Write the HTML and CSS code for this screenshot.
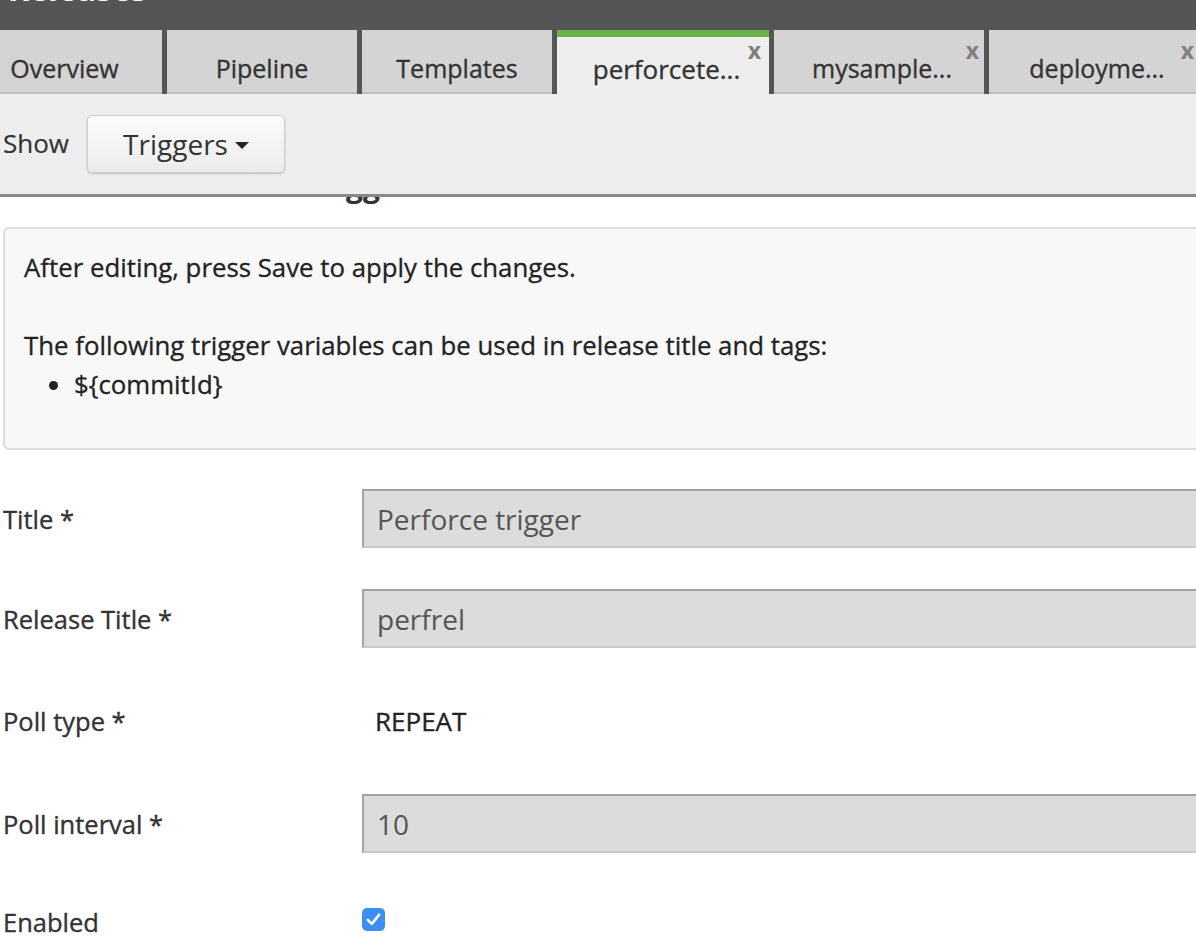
FILE: index.html
```html
<!DOCTYPE html>
<html lang="en">
<head>
<meta charset="utf-8">
<title>Releases</title>
<link rel="stylesheet" href="styles.css">
</head>
<body>
<div class="app">
  <header class="topbar">
    <h1 class="app-title">Releases</h1>
  </header>

  <nav class="tabs">
    <div class="tab tab-overview">Overview</div>
    <div class="tab">Pipeline</div>
    <div class="tab">Templates</div>
    <div class="tab tab-closable tab-active">perforcete...<span class="tab-close">x</span></div>
    <div class="tab tab-closable">mysample...<span class="tab-close">x</span></div>
    <div class="tab tab-closable">deployme...<span class="tab-close">x</span></div>
  </nav>

  <div class="toolbar">
    <span class="toolbar-label">Show</span>
    <button class="dropdown-btn" type="button">Triggers <span class="caret"></span></button>
  </div>

  <main class="content">
    <div class="heading-clip">
      <h2 class="page-heading">Perforce Release Trigger</h2>
    </div>

    <div class="info-box">
      <p class="info-line">After editing, press Save to apply the changes.</p>
      <p class="info-line info-gap">The following trigger variables can be used in release title and tags:</p>
      <ul class="info-list">
        <li>${commitId}</li>
      </ul>
    </div>

    <form class="form">
      <div class="form-row">
        <label class="form-label">Title *</label>
        <div class="form-input">Perforce trigger</div>
      </div>
      <div class="form-row">
        <label class="form-label">Release Title *</label>
        <div class="form-input">perfrel</div>
      </div>
      <div class="form-row form-row-text">
        <label class="form-label">Poll type *</label>
        <div class="form-value">REPEAT</div>
      </div>
      <div class="form-row">
        <label class="form-label">Poll interval *</label>
        <div class="form-input">10</div>
      </div>
      <div class="form-row form-row-check">
        <label class="form-label">Enabled</label>
        <span class="checkbox">
          <svg viewBox="0 0 24 24" width="24" height="24"><path d="M5.5 12.5 L10 17 L18.5 6.5" fill="none" stroke="#fff" stroke-width="3" stroke-linecap="round" stroke-linejoin="round"/></svg>
        </span>
      </div>
    </form>
  </main>
</div>
</body>
</html>
```

FILE: styles.css
```css
* { box-sizing: border-box; }

html, body {
  margin: 0;
  padding: 0;
  width: 1196px;
  height: 942px;
  overflow: hidden;
  background: #fff;
}

body {
  font-family: "Open Sans", Lato, "Liberation Sans", sans-serif;
  color: #333;
}

.app {
  width: 1196px;
  height: 942px;
  overflow: hidden;
}

/* top bar */
.topbar {
  height: 30px;
  background: #555;
  overflow: hidden;
}

.app-title {
  margin: -24px 0 0 8px;
  font-size: 32px;
  line-height: 26px;
  font-weight: 700;
  color: #fff;
}

/* tabs */
.tabs {
  display: flex;
  gap: 5px;
  height: 64px;
  background: #555;
  margin-left: -33px;
  width: 1300px;
}

.tab {
  position: relative;
  flex: 0 0 auto;
  width: 190px;
  height: 64px;
  background: #d4d4d4;
  border-bottom: 2px solid #bdbdbd;
  display: flex;
  align-items: center;
  justify-content: center;
  padding-top: 13px;
  font-size: 25px;
  color: #333;
  -webkit-text-stroke: 0.35px #333;
}

.tab-overview { width: 195px; }

.tab-closable {
  width: 210px;
  padding-left: 6px;
}

.tab-active {
  width: 212px;
  background: #eee;
  border-bottom: none;
  border-top: 7px solid #6ab34a;
  padding-top: 7px;
  padding-left: 7px;
  font-size: 26px;
}

.tab-close {
  position: absolute;
  right: 5px;
  top: 9px;
  font-size: 23px;
  font-weight: 700;
  color: #808080;
  line-height: 23px;
  -webkit-text-stroke: 0;
}

.tab-active .tab-close { top: 2px; right: 8px; }

/* toolbar */
.toolbar {
  height: 103px;
  background: #eee;
  border-bottom: 3px solid #888;
  display: flex;
  align-items: center;
  padding: 0 0 3px 3px;
  gap: 18px;
}

.toolbar-label {
  font-size: 26px;
  color: #333;
  -webkit-text-stroke: 0.2px #333;
}

.dropdown-btn {
  width: 198px;
  height: 58px;
  border: 1px solid #ccc;
  border-radius: 5px;
  background: linear-gradient(#fbfbfb, #ececec);
  box-shadow: 0 1px 2px rgba(0,0,0,0.2);
  font-family: inherit;
  font-size: 28px;
  color: #333;
  display: flex;
  align-items: center;
  justify-content: center;
  gap: 7px;
  padding: 0;
  margin-top: 3px;
}

.caret {
  width: 0;
  height: 0;
  border-left: 7px solid transparent;
  border-right: 7px solid transparent;
  border-top: 7px solid #222;
  margin-top: 2px;
}

/* content */
.content {
  padding-left: 3px;
}

.heading-clip {
  height: 8px;
  overflow: hidden;
}

.page-heading {
  margin: -27px 0 0 45px;
  font-size: 30px;
  line-height: 32px;
  font-weight: 700;
  color: #333;
  white-space: nowrap;
}

.info-box {
  margin-top: 22px;
  width: 1300px;
  height: 223px;
  background: #f8f8f8;
  border: 2px solid #ddd;
  border-radius: 6px;
  padding: 19px 0 0 19px;
  font-size: 25.8px;
  line-height: 39px;
  color: #222;
  -webkit-text-stroke: 0.3px #222;
}

.info-line { margin: 0; }

.info-gap { margin-top: 39px; }

.info-list {
  margin: 0;
  padding-left: 50px;
}

/* form */
.form {
  margin-top: 39px;
  display: flex;
  flex-direction: column;
}

.form-row {
  display: grid;
  grid-template-columns: 359px 1fr;
  align-items: center;
  height: 59px;
  margin-bottom: 41px;
}

.form-row-text {
  height: 64px;
}

.form-row-check {
  height: 56px;
}

.form-label {
  font-size: 25.5px;
  color: #333;
  -webkit-text-stroke: 0.35px #333;
}

.form-input {
  height: 59px;
  width: 900px;
  background: #dcdcdc;
  border-style: solid;
  border-width: 2px;
  border-color: #a3a3a3 #c9c9c9 #c9c9c9 #a3a3a3;
  display: flex;
  align-items: center;
  padding-left: 13px;
  font-size: 28px;
  color: #555;
}

.form-value {
  padding-left: 13px;
  font-size: 26px;
  color: #222;
  -webkit-text-stroke: 0.35px #222;
}

.checkbox {
  width: 23px;
  height: 23px;
  border-radius: 5px;
  background: #3d8ef2;
  display: flex;
  align-items: center;
  justify-content: center;
  margin-top: -6px;
}

.checkbox svg { width: 21px; height: 21px; }
```
